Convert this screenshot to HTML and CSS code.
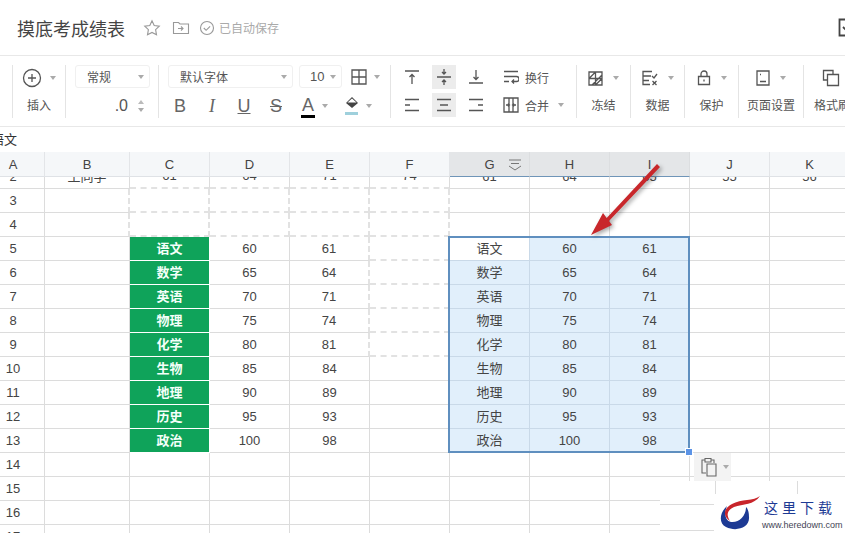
FILE: index.html
```html
<!doctype html>
<html lang="zh-CN">
  <head>
    <meta charset="UTF-8" />
    <title>摸底考成绩表</title>
    <link rel="stylesheet" href="styles.css">
  </head>
  <body>
    <header class="titlebar">
      <h1 class="doc-title">摸底考成绩表</h1>
      <svg class="title-icon star" width="18" height="18" viewBox="0 0 18 18"><path d="M9 1.800l2.200 4.700 5.100.7-3.700 3.500.9 5.100L9 13.400l-4.500 2.400.9-5.100-3.700-3.500 5.100-.7z"/></svg>
      <svg class="title-icon folder" width="18" height="14" viewBox="0 0 18 14"><path d="M1.500 1.500h5l1.500 1.500h8.500v9.500h-15z"/><path d="M6 7.500h5M9 5.500l2 2-2 2"/></svg>
      <svg class="title-icon saved" width="16" height="16" viewBox="0 0 16 16"><circle cx="8" cy="8" r="6.500"/><path d="M4.800 8l2.300 2.300 4-4"/></svg>
      <span class="save-state">已自动保存</span>
      <svg class="corner-icon" width="20" height="20" viewBox="0 0 20 20"><path d="M1.500 1.500h16v16h-16z"/><path d="M5 9l3 3 6-6"/></svg>
    </header>

    <div class="toolbar">
      <div class="group g-insert">
        <div class="tool"><svg class="ico" width="20" height="20" viewBox="0 0 20 20"><circle cx="10" cy="10" r="8.500"/><path d="M10 6v8M6 10h8"/></svg><i class="caret"></i></div>
        <div class="label">插入</div>
      </div>
      <div class="group g-format">
        <div class="select select-format"><span>常规</span><i class="caret"></i></div>
        <div class="decimal"><span>.0</span><span class="stepper"><i class="caret up"></i><i class="caret"></i></span></div>
      </div>
      <div class="group g-font">
        <div class="font-top">
          <div class="select select-font"><span>默认字体</span><i class="caret"></i></div>
          <div class="select select-size"><span>10</span><i class="caret"></i></div>
          <div class="tool"><svg class="ico" width="16" height="16" viewBox="0 0 16 16"><path d="M1 1h14v14H1zM8 1v14M1 8h14"/></svg><i class="caret"></i></div>
        </div>
        <div class="font-bottom">
          <span class="glyph">B</span>
          <span class="glyph serif-i">I</span>
          <span class="glyph under">U</span>
          <span class="glyph strike">S</span>
          <span class="glyph color-a">A</span><i class="caret"></i>
          <svg class="fill-icon" width="16" height="20" viewBox="0 0 16 20"><path class="fill-dark" d="M8 1l6 6-6 5-6-5z"/><path class="fill-top" d="M3.500 6.500L8 2.500l4.500 4z"/><path class="fill-bar" d="M1 16h13v3H1z"/></svg><i class="caret"></i>
        </div>
      </div>
      <div class="group g-align">
        <div class="align-grid">
          <span class="cell-btn"><svg class="ico" width="16" height="16" viewBox="0 0 16 16"><path d="M1 2h14M8 15V6M5.500 8L8 5.500 10.500 8"/></svg></span>
          <span class="cell-btn on"><svg class="ico" width="16" height="18" viewBox="0 0 16 18"><path d="M1 9h14M8 1v5M6 4l2 2 2-2M8 17v-5M6 14l2-2 2 2"/></svg></span>
          <span class="cell-btn"><svg class="ico" width="16" height="16" viewBox="0 0 16 16"><path d="M1 14h14M8 1v9M5.500 8L8 10.500 10.500 8"/></svg></span>
          <span class="cell-btn"><svg class="ico" width="16" height="14" viewBox="0 0 16 14"><path d="M1 1.500h14M1 7h5M1 12.500h14"/></svg></span>
          <span class="cell-btn on"><svg class="ico" width="16" height="14" viewBox="0 0 16 14"><path d="M1 1.500h14M4 7h8M1 12.500h14"/></svg></span>
          <span class="cell-btn"><svg class="ico" width="16" height="14" viewBox="0 0 16 14"><path d="M1 1.500h14M10 7h5M1 12.500h14"/></svg></span>
        </div>
        <div class="wrap-col">
          <div class="text-tool"><svg class="ico" width="16" height="14" viewBox="0 0 16 14"><path d="M1 1.500h14M1 6.500h12.500a2 2 0 0 1 0 5H9M11 9.500l-2 2 2 2M1 11.500h5"/></svg><span>换行</span></div>
          <div class="text-tool"><svg class="ico" width="16" height="16" viewBox="0 0 16 16"><path d="M1 1h5v14H1zM10 1h5v14h-5zM6 1h4M6 15h4M3 8h3M10 8h3M5 6.500L6.500 8 5 9.500M11 6.500L9.500 8 11 9.500"/></svg><span>合并</span><i class="caret merge-caret"></i></div>
        </div>
      </div>
      <div class="group g-icon">
        <div class="tool"><svg class="ico" width="15" height="15" viewBox="0 0 15 15"><path d="M1 1h13v13H1zM7.500 1v13M1 7.500h13M1 7.500L7.500 1M7.500 14L14 7.500M4 14l10-10"/></svg><i class="caret"></i></div>
        <div class="label">冻结</div>
      </div>
      <div class="group g-icon">
        <div class="tool"><svg class="ico" width="16" height="16" viewBox="0 0 16 16"><path d="M10 1.500H1v13h7M1 6h8M1 10.500h6M10 6l2 2 3-4M10.500 11l4 4M14.500 11l-4 4"/></svg><i class="caret"></i></div>
        <div class="label">数据</div>
      </div>
      <div class="group g-icon">
        <div class="tool"><svg class="ico" width="14" height="16" viewBox="0 0 14 16"><path d="M1.500 6.500h11v8h-11zM4 6.500V4a3 3 0 0 1 6 0v2.500M7 9.500v2"/></svg><i class="caret"></i></div>
        <div class="label">保护</div>
      </div>
      <div class="group g-icon g-page">
        <div class="tool"><svg class="ico" width="14" height="16" viewBox="0 0 14 16"><path d="M1 1h12v14H1zM4 11.500h6M4 4.500h1"/></svg><i class="caret"></i></div>
        <div class="label">页面设置</div>
      </div>
      <div class="group g-last">
        <div class="tool"><svg class="ico" width="18" height="18" viewBox="0 0 18 18"><path d="M5 11H1.500V1.500H11V5M5.500 5.500h11v11h-11z"/></svg></div>
        <div class="label">格式刷</div>
      </div>
    </div>

    <div class="formula-bar"><span>语文</span></div>

    <main class="sheet">
      <div class="col-heads">
        <div class="head a-head">A</div><div class="head">B</div><div class="head">C</div><div class="head">D</div><div class="head">E</div><div class="head">F</div>
        <div class="head on">G<svg class="filter-icon" width="14" height="12" viewBox="0 0 14 12"><path d="M1 1h12M3 4.500h8M1 7l6 4 6-4"/></svg></div><div class="head on">H</div><div class="head on">I</div><div class="head">J</div><div class="head">K</div>
      </div>

      <div class="grid-clip">
        <div class="grid">
          <div class="c num">2</div><div class="c">王同学</div><div class="c ants-b">61</div><div class="c ants-b">64</div><div class="c ants-b">71</div><div class="c ants-b">74</div><div class="c">61</div><div class="c">64</div><div class="c">65</div><div class="c">55</div><div class="c">56</div>
          <div class="c num">3</div><div class="c ants-r"></div><div class="c ants-b ants-r"></div><div class="c ants-b ants-r"></div><div class="c ants-b ants-r"></div><div class="c ants-b ants-r"></div><div class="c"></div><div class="c"></div><div class="c"></div><div class="c"></div><div class="c"></div>
          <div class="c num">4</div><div class="c ants-r"></div><div class="c ants-b ants-r"></div><div class="c ants-b ants-r"></div><div class="c ants-b ants-r"></div><div class="c ants-b ants-r"></div><div class="c"></div><div class="c"></div><div class="c"></div><div class="c"></div><div class="c"></div>
          <div class="c num">5</div><div class="c"></div><div class="c subject">语文</div><div class="c">60</div><div class="c ants-r">61</div><div class="c ants-b"></div><div class="c sel first">语文</div><div class="c sel">60</div><div class="c sel">61</div><div class="c"></div><div class="c"></div>
          <div class="c num">6</div><div class="c"></div><div class="c subject">数学</div><div class="c">65</div><div class="c ants-r">64</div><div class="c ants-b"></div><div class="c sel">数学</div><div class="c sel">65</div><div class="c sel">64</div><div class="c"></div><div class="c"></div>
          <div class="c num">7</div><div class="c"></div><div class="c subject">英语</div><div class="c">70</div><div class="c ants-r">71</div><div class="c ants-b"></div><div class="c sel">英语</div><div class="c sel">70</div><div class="c sel">71</div><div class="c"></div><div class="c"></div>
          <div class="c num">8</div><div class="c"></div><div class="c subject">物理</div><div class="c">75</div><div class="c ants-r">74</div><div class="c ants-b"></div><div class="c sel">物理</div><div class="c sel">75</div><div class="c sel">74</div><div class="c"></div><div class="c"></div>
          <div class="c num">9</div><div class="c"></div><div class="c subject">化学</div><div class="c">80</div><div class="c ants-r">81</div><div class="c ants-b"></div><div class="c sel">化学</div><div class="c sel">80</div><div class="c sel">81</div><div class="c"></div><div class="c"></div>
          <div class="c num">10</div><div class="c"></div><div class="c subject">生物</div><div class="c">85</div><div class="c">84</div><div class="c"></div><div class="c sel">生物</div><div class="c sel">85</div><div class="c sel">84</div><div class="c"></div><div class="c"></div>
          <div class="c num">11</div><div class="c"></div><div class="c subject">地理</div><div class="c">90</div><div class="c">89</div><div class="c"></div><div class="c sel">地理</div><div class="c sel">90</div><div class="c sel">89</div><div class="c"></div><div class="c"></div>
          <div class="c num">12</div><div class="c"></div><div class="c subject">历史</div><div class="c">95</div><div class="c">93</div><div class="c"></div><div class="c sel">历史</div><div class="c sel">95</div><div class="c sel">93</div><div class="c"></div><div class="c"></div>
          <div class="c num">13</div><div class="c"></div><div class="c subject">政治</div><div class="c">100</div><div class="c">98</div><div class="c"></div><div class="c sel">政治</div><div class="c sel">100</div><div class="c sel">98</div><div class="c"></div><div class="c"></div>
          <div class="c num">14</div><div class="c"></div><div class="c"></div><div class="c"></div><div class="c"></div><div class="c"></div><div class="c"></div><div class="c"></div><div class="c"></div><div class="c"></div><div class="c"></div>
          <div class="c num">15</div><div class="c"></div><div class="c"></div><div class="c"></div><div class="c"></div><div class="c"></div><div class="c"></div><div class="c"></div><div class="c"></div><div class="c"></div><div class="c"></div>
          <div class="c num">16</div><div class="c"></div><div class="c"></div><div class="c"></div><div class="c"></div><div class="c"></div><div class="c"></div><div class="c"></div><div class="c"></div><div class="c"></div><div class="c"></div>
          <div class="c num">17</div><div class="c"></div><div class="c"></div><div class="c"></div><div class="c"></div><div class="c"></div><div class="c"></div><div class="c"></div><div class="c"></div><div class="c"></div><div class="c"></div>
        </div>
      </div>

      <!-- selection box and everything pasted on top of the grid -->
      <div class="selection"><span class="fill-handle"></span></div>

      <div class="paste-btn">
        <svg class="ico paste-icon" width="16" height="20" viewBox="0 0 16 20"><path d="M5 16H1V3h3M10 3h3v3M4 1.500h6V5H4zM6 7h9v12H6z"/></svg>
        <i class="caret"></i>
      </div>

      <div class="watermark">
        <svg class="wm-logo" width="42" height="36" viewBox="0 0 42 36"><path class="wm-blue" d="M8 11C1 17-1 28 7 32c10 5 24 1 23-10 0-5-1-8-3-10 0 9-7 16-15 15C6 26 5 18 8 11z"/><path class="wm-red" d="M41 1C35 6 22 4 13 9 5 13 3 21 11 26 7 20 8 15 15 12 24 9 35 10 41 1z"/></svg>
        <div class="wm-text">
          <div class="wm-name">这里下载</div>
          <div class="wm-url">www.heredown.com</div>
        </div>
      </div>

      <svg class="arrow" width="90" height="90" viewBox="0 0 90 90"><path class="arrow-body" d="M70 12L73 15 22 69 25 73 4 83 16 61 19.700 66z"/></svg>
    </main>
  </body>
</html>
```

FILE: styles.css
```css
* {
  box-sizing: border-box;
}

html,
body {
  height: 100%;
}

body {
  margin: 0;
  overflow: hidden;
  background: #fff;
  color: #444;
  font-family: "Liberation Sans", "Noto Sans CJK SC", sans-serif;
  font-size: 12px;
}

svg {
  display: block;
  flex: none;
}

.ico {
  fill: none;
  stroke: #555;
  stroke-width: 1.3;
}

/* title row */
.titlebar {
  height: 56px;
  display: flex;
  align-items: center;
  padding-left: 17px;
  border-bottom: 1px solid #e8e8e8;
}

.doc-title {
  margin: 0 18px 0 0;
  font-size: 18px;
  font-weight: normal;
  color: #444;
}

.title-icon {
  fill: none;
  stroke: #999;
  stroke-width: 1.1;
}

.star {
  margin-right: 11px;
}

.folder {
  margin-right: 9px;
}

.saved {
  margin-right: 4px;
}

.save-state {
  color: #aaa;
}

.corner-icon {
  margin-left: auto;
  margin-right: -13px;
  fill: none;
  stroke: #444;
  stroke-width: 1.8;
}

/* toolbar */
.toolbar {
  height: 71px;
  padding: 9px 0 8px 12px;
  display: flex;
  border-bottom: 1px solid #e8e8e8;
  overflow: hidden;
}

.group {
  flex: none;
  height: 53px;
  border-right: 1px solid #e4e4e4;
  display: flex;
  flex-direction: column;
  justify-content: space-between;
}

.g-insert {
  width: 54px;
  border-left: 1px solid #e4e4e4;
  align-items: center;
}

.g-format {
  width: 93px;
  padding-left: 9px;
}

.g-font {
  width: 232px;
  padding-left: 8px;
}

.g-align {
  width: 186px;
  flex-direction: row;
  justify-content: flex-start;
  padding-left: 9px;
}

.g-icon {
  width: 54px;
  align-items: center;
}

.g-page {
  width: 65px;
}

.g-last {
  width: 60px;
  border-right: 0;
  padding-left: 10px;
  white-space: nowrap;
}

.tool {
  height: 26px;
  display: flex;
  align-items: center;
  gap: 8px;
}

.g-icon .tool {
  gap: 10px;
}

.g-last .tool {
  padding-left: 8px;
}

.label {
  height: 24px;
  line-height: 24px;
  color: #555;
}

.caret {
  display: inline-block;
  flex: none;
  width: 0;
  height: 0;
  border-left: 3px solid transparent;
  border-right: 3px solid transparent;
  border-top: 4px solid #aaa;
}

.caret.up {
  border-top: 0;
  border-bottom: 4px solid #bbb;
}

.select {
  height: 23px;
  display: flex;
  align-items: center;
  justify-content: space-between;
  border: 1px solid #f0f0f0;
  border-radius: 3px;
  padding: 0 5px 0 11px;
  color: #555;
}

.select-format {
  width: 75px;
}

.select-font {
  width: 125px;
  margin-left: 1px;
}

.select-size {
  width: 43px;
  padding-left: 10px;
  font-size: 13px;
}

.decimal {
  height: 24px;
  display: flex;
  align-items: center;
  justify-content: flex-end;
  gap: 10px;
  padding-right: 14px;
  font-size: 16px;
  color: #555;
}

.stepper {
  display: flex;
  flex-direction: column;
  gap: 4px;
}

.font-top {
  display: flex;
  gap: 6px;
}

.font-top .tool {
  margin-left: 3px;
  height: 23px;
  gap: 7px;
}

.font-bottom {
  height: 24px;
  display: flex;
  align-items: center;
  margin-left: -3px;
}

.glyph {
  width: 32px;
  text-align: center;
  font-size: 18px;
  line-height: 24px;
  color: #666;
}

.serif-i {
  font-family: "Liberation Serif", serif;
  font-style: italic;
}

.under {
  text-decoration: underline;
}

.strike {
  text-decoration: line-through;
}

.color-a {
  width: 14px;
  height: 23px;
  margin-left: 9px;
  margin-right: 7px;
  line-height: 20px;
  border-bottom: 3px solid #000;
}

.font-bottom .caret {
  margin-right: 16px;
}

.fill-icon {
  margin-right: 6px;
}

.fill-dark {
  fill: #444;
}

.fill-top {
  fill: #fff;
}

.fill-bar {
  fill: #9fd0dc;
}

.align-grid {
  width: 96px;
  flex: none;
  display: grid;
  grid-template-columns: repeat(3, 32px);
  grid-template-rows: 24px 24px;
  row-gap: 4px;
  margin-left: -4px;
}

.cell-btn {
  width: 24px;
  justify-self: center;
  display: flex;
  align-items: center;
  justify-content: center;
}

.cell-btn.on {
  background: #ececec;
}

.wrap-col {
  margin-left: 11px;
  display: flex;
  flex-direction: column;
  justify-content: space-between;
  height: 52px;
}

.text-tool {
  height: 24px;
  display: flex;
  align-items: center;
  gap: 6px;
  color: #555;
}

.merge-caret {
  margin-left: 3px;
}

/* formula row */
.formula-bar {
  height: 25px;
  line-height: 25px;
  font-size: 13px;
  color: #333;
  overflow: hidden;
}

.formula-bar span {
  margin-left: -9px;
}

/* sheet */
.sheet {
  position: relative;
  height: 381px;
  overflow: hidden;
}

.col-heads,
.grid {
  display: grid;
  grid-template-columns: 45px 85px repeat(9, 80px);
  width: 850px;
}

.col-heads {
  height: 25px;
}

.head {
  position: relative;
  height: 25px;
  display: flex;
  align-items: center;
  justify-content: center;
  background: #f5f7f9;
  border-right: 1px solid #e3e5e8;
  border-bottom: 1px solid #dfe2e6;
  font-size: 13px;
  color: #444;
}

.head.on {
  background: #e4e6e8;
  border-right-color: #dcdee0;
  border-bottom-color: #6f95b8;
}

.a-head {
  padding-right: 18px;
}

.filter-icon {
  position: absolute;
  top: 7px;
  right: 7px;
  fill: none;
  stroke: #777;
}

.grid-clip {
  height: 356px;
  overflow: hidden;
}

.grid {
  grid-auto-rows: 24px;
  margin-top: -12px;
}

.c {
  display: flex;
  align-items: center;
  justify-content: center;
  border-right: 1px solid #dcdcdc;
  border-bottom: 1px solid #dcdcdc;
  font-size: 13px;
  line-height: 14px;
  color: #444;
}

.num {
  padding-right: 18px;
  background: #fff;
}

.ants-b {
  border-bottom: 2px dashed #e2e2e2;
}

.ants-r {
  border-right: 2px dashed #e2e2e2;
}

.subject {
  background: #0fa35a;
  border-color: #fff;
  color: #f4fff9;
  font-weight: bold;
}

.sel {
  background: #e1effb;
  border-color: #c9d9e8;
}

.sel.first {
  background: #fff;
}

.selection {
  position: absolute;
  left: 448px;
  top: 84px;
  width: 242px;
  height: 217px;
  border: 2px solid #5f8fbf;
  pointer-events: none;
}

.fill-handle {
  position: absolute;
  right: -5px;
  bottom: -5px;
  width: 8px;
  height: 8px;
  background: #5b93e6;
  border: 1px solid #fff;
}

.paste-btn {
  position: absolute;
  left: 694px;
  top: 301px;
  width: 37px;
  height: 28px;
  display: flex;
  align-items: center;
  gap: 6px;
  padding-left: 7px;
  background: #f3f3f3;
}

.paste-icon {
  stroke: #666;
  stroke-width: 1.1;
}

/* watermark patch in the bottom corner */
.watermark {
  position: absolute;
  left: 660px;
  top: 329px;
  width: 185px;
  height: 52px;
  display: flex;
  background: #fff;
  padding: 14px 0 0 59px;
}

/* stray bits of grid line left around the patch */
.watermark::before {
  content: "";
  position: absolute;
  left: 0;
  top: 23px;
  width: 54px;
  height: 25px;
  border-top: 1px solid #dcdcdc;
  border-bottom: 1px solid #dcdcdc;
}

.watermark::after {
  content: "";
  position: absolute;
  left: 55px;
  top: 0;
  width: 81px;
  height: 13px;
  border-left: 1px solid #dcdcdc;
  border-right: 1px solid #dcdcdc;
}

.wm-logo {
  margin-right: 3px;
}

.wm-blue {
  fill: #1d3a94;
}

.wm-red {
  fill: #c8252b;
}

.wm-text {
  margin-top: 1px;
}

.wm-name {
  font-family: "Noto Sans CJK SC", sans-serif;
  font-size: 14px;
  line-height: 22px;
  letter-spacing: 4px;
  color: #1d3a94;
}

.wm-url {
  margin-left: -2px;
  font-size: 9px;
  line-height: 14px;
  color: #445;
}

.arrow {
  position: absolute;
  left: 587px;
  top: 0;
  filter: drop-shadow(2px 2px 2px rgba(0, 0, 0, 0.35));
}

.arrow-body {
  fill: #c8272b;
}
```
